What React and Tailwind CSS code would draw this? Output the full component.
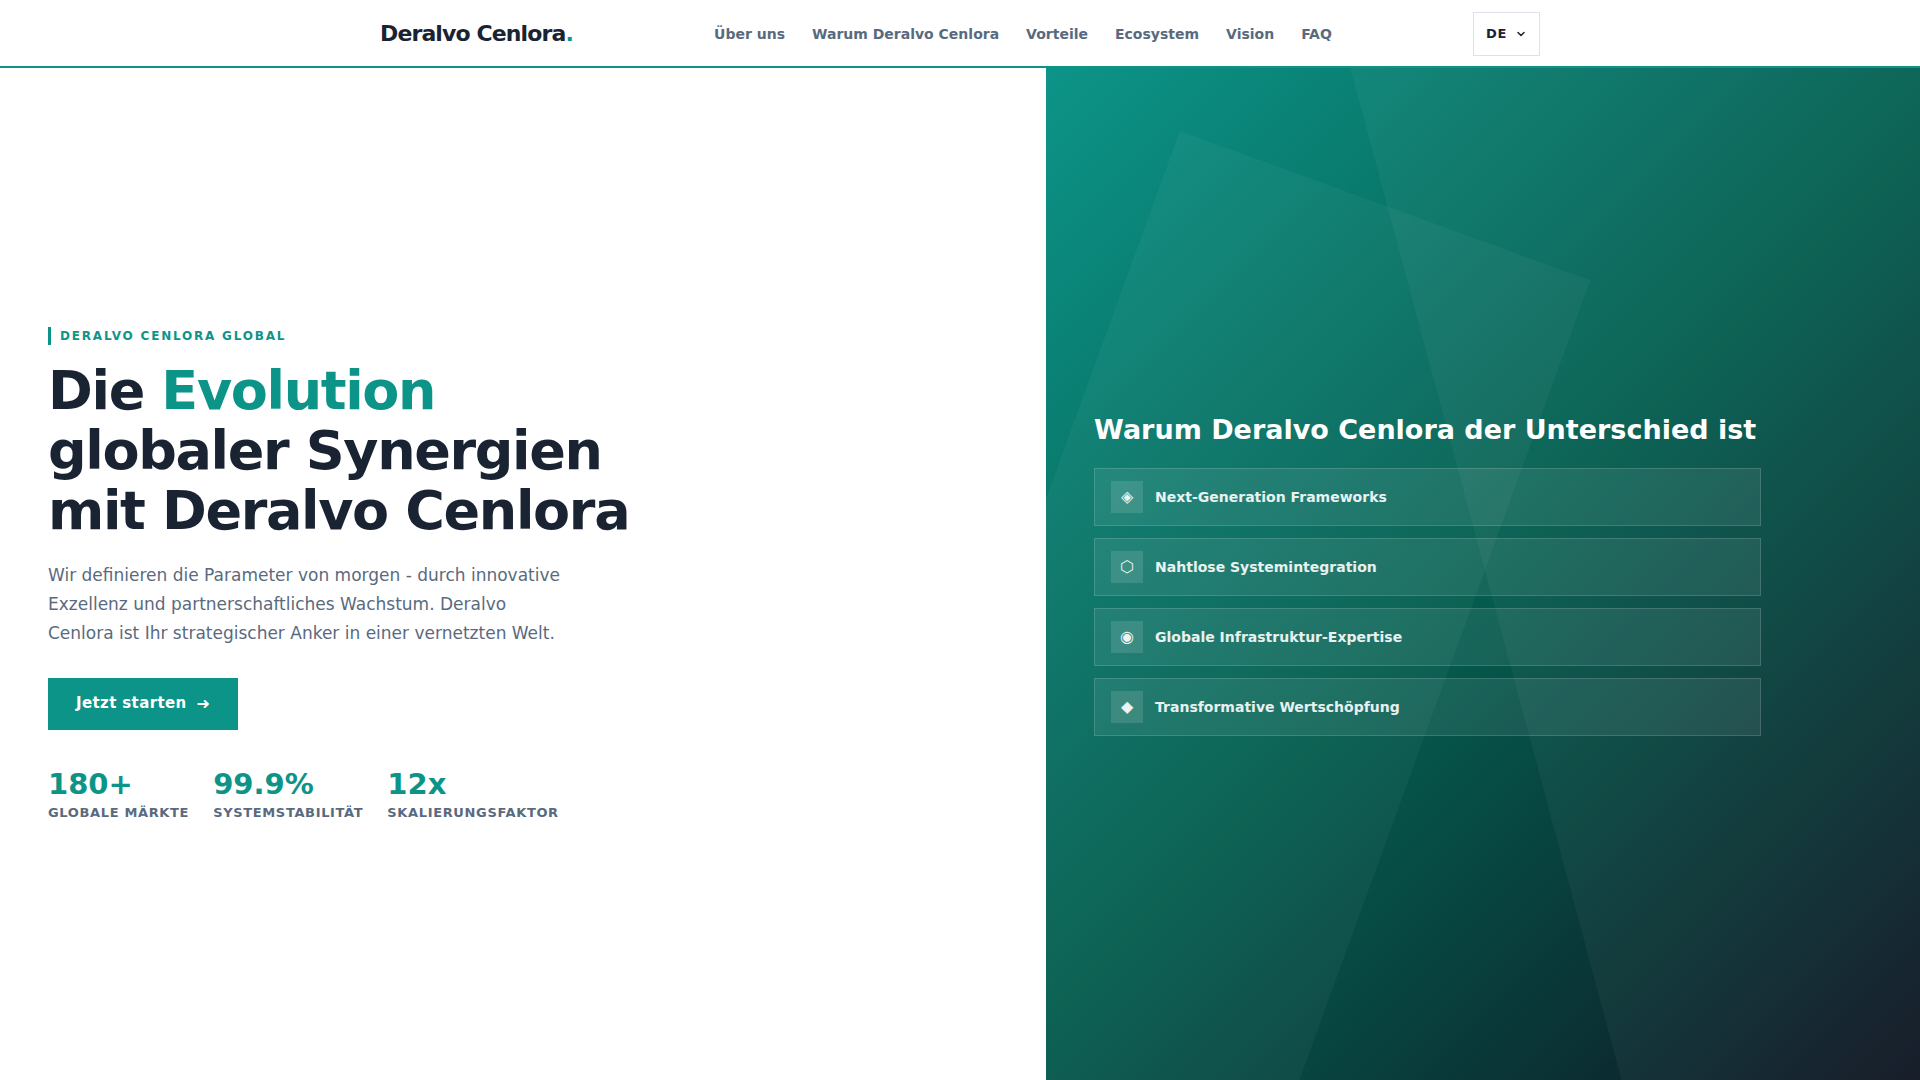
import React from 'react';
import { ChevronDown } from 'lucide-react';

const navLinks = ['Über uns', 'Warum Deralvo Cenlora', 'Vorteile', 'Ecosystem', 'Vision', 'FAQ'];

const stats = [
  { value: '180+', label: 'Globale Märkte' },
  { value: '99.9%', label: 'Systemstabilität' },
  { value: '12x', label: 'Skalierungsfaktor' }
];

const features = [
  { icon: '◈', title: 'Next-Generation Frameworks' },
  { icon: '⬡', title: 'Nahtlose Systemintegration' },
  { icon: '◉', title: 'Globale Infrastruktur-Expertise' },
  { icon: '◆', title: 'Transformative Wertschöpfung' }
];

function Header() {
  return (
    <header className="relative z-10 bg-white border-b-2 border-[#0d9488]">
      <div className="max-w-[1200px] mx-auto px-5 pt-3 pb-2.5 flex items-center justify-between">
        <a href="#" className="text-[22px] leading-8 font-extrabold tracking-[-0.04em]">
          Deralvo Cenlora<span className="text-[#0d9488]">.</span>
        </a>

        <nav className="flex items-center gap-[27px] text-sm font-semibold text-[#5a6a7e]">
          {navLinks.map((link) => (
            <a key={link} href="#" className="hover:text-[#0d9488]">{link}</a>
          ))}
        </nav>

        <button className="h-11 px-3 flex items-center gap-2 border border-[#dde1ea] text-[13px] font-bold tracking-wider">
          DE
          <ChevronDown className="w-3 h-3" strokeWidth={3} />
        </button>
      </div>
    </header>
  );
}

function HeroIntro() {
  return (
    <div className="px-12 py-16 flex flex-col justify-center items-start bg-white">
      <p className="border-l-3 border-[#0d9488] pl-[9px] mb-4 text-xs leading-[18px] font-bold uppercase tracking-[0.15em] text-[#0d9488]">
        Deralvo Cenlora Global
      </p>

      <h1 className="max-w-[620px] mb-5 text-[54px] leading-[60px] font-extrabold tracking-tight">
        Die <span className="text-[#0d9488]">Evolution</span> globaler Synergien mit Deralvo Cenlora
      </h1>

      <p className="max-w-[520px] mb-[30px] text-[17px] leading-[29px] text-[#5a6a7e]">
        Wir definieren die Parameter von morgen - durch innovative Exzellenz und
        partnerschaftliches Wachstum. Deralvo Cenlora ist Ihr strategischer Anker in einer
        vernetzten Welt.
      </p>

      <a
        href="#"
        className="h-[52px] px-7 mb-9 inline-flex items-center gap-2.5 bg-[#0d9488] text-white text-[15px] font-bold tracking-wide"
      >
        Jetzt starten
        <span className="text-base">➜</span>
      </a>

      <div className="flex gap-6">
        {stats.map((stat) => (
          <div key={stat.label}>
            <div className="mb-0.5 text-[29px] leading-9 font-extrabold text-[#0d9488]">{stat.value}</div>
            <div className="text-[13px] leading-[18px] font-semibold uppercase tracking-wider text-[#5a6a7e]">
              {stat.label}
            </div>
          </div>
        ))}
      </div>
    </div>
  );
}

function HeroPanel() {
  return (
    <div className="relative overflow-hidden px-12 py-16 flex flex-col justify-center items-start bg-[linear-gradient(135deg,#0d9488_0%,#045d4f_50%,#0f1422_100%)]">
      {/* Tilted translucent planes behind the list */}
      <div className="absolute -top-[30%] -right-[20%] w-[70%] h-[150%] -rotate-15 bg-white/4" />
      <div className="absolute -bottom-[30%] -left-[10%] w-1/2 h-[120%] rotate-20 bg-white/4" />

      <div className="relative w-full max-w-[667px]">
        <h2 className="mb-5 text-[27px] leading-9 font-extrabold text-white">
          Warum Deralvo Cenlora der Unterschied ist
        </h2>

        <ul className="flex flex-col gap-3">
          {features.map((feature) => (
            <li
              key={feature.title}
              className="px-4 py-3 flex items-center gap-3 bg-white/8 border border-white/15 text-sm font-semibold text-white/90"
            >
              <span className="w-8 h-8 flex items-center justify-center bg-white/12 text-base">
                {feature.icon}
              </span>
              {feature.title}
            </li>
          ))}
        </ul>
      </div>
    </div>
  );
}

export default function App() {
  return (
    <div className="min-h-screen flex flex-col text-[#1a2332] font-['DejaVu_Sans',sans-serif]">
      <Header />
      <main className="flex-1 grid grid-cols-[1.197fr_1fr]">
        <HeroIntro />
        <HeroPanel />
      </main>
    </div>
  );
}
